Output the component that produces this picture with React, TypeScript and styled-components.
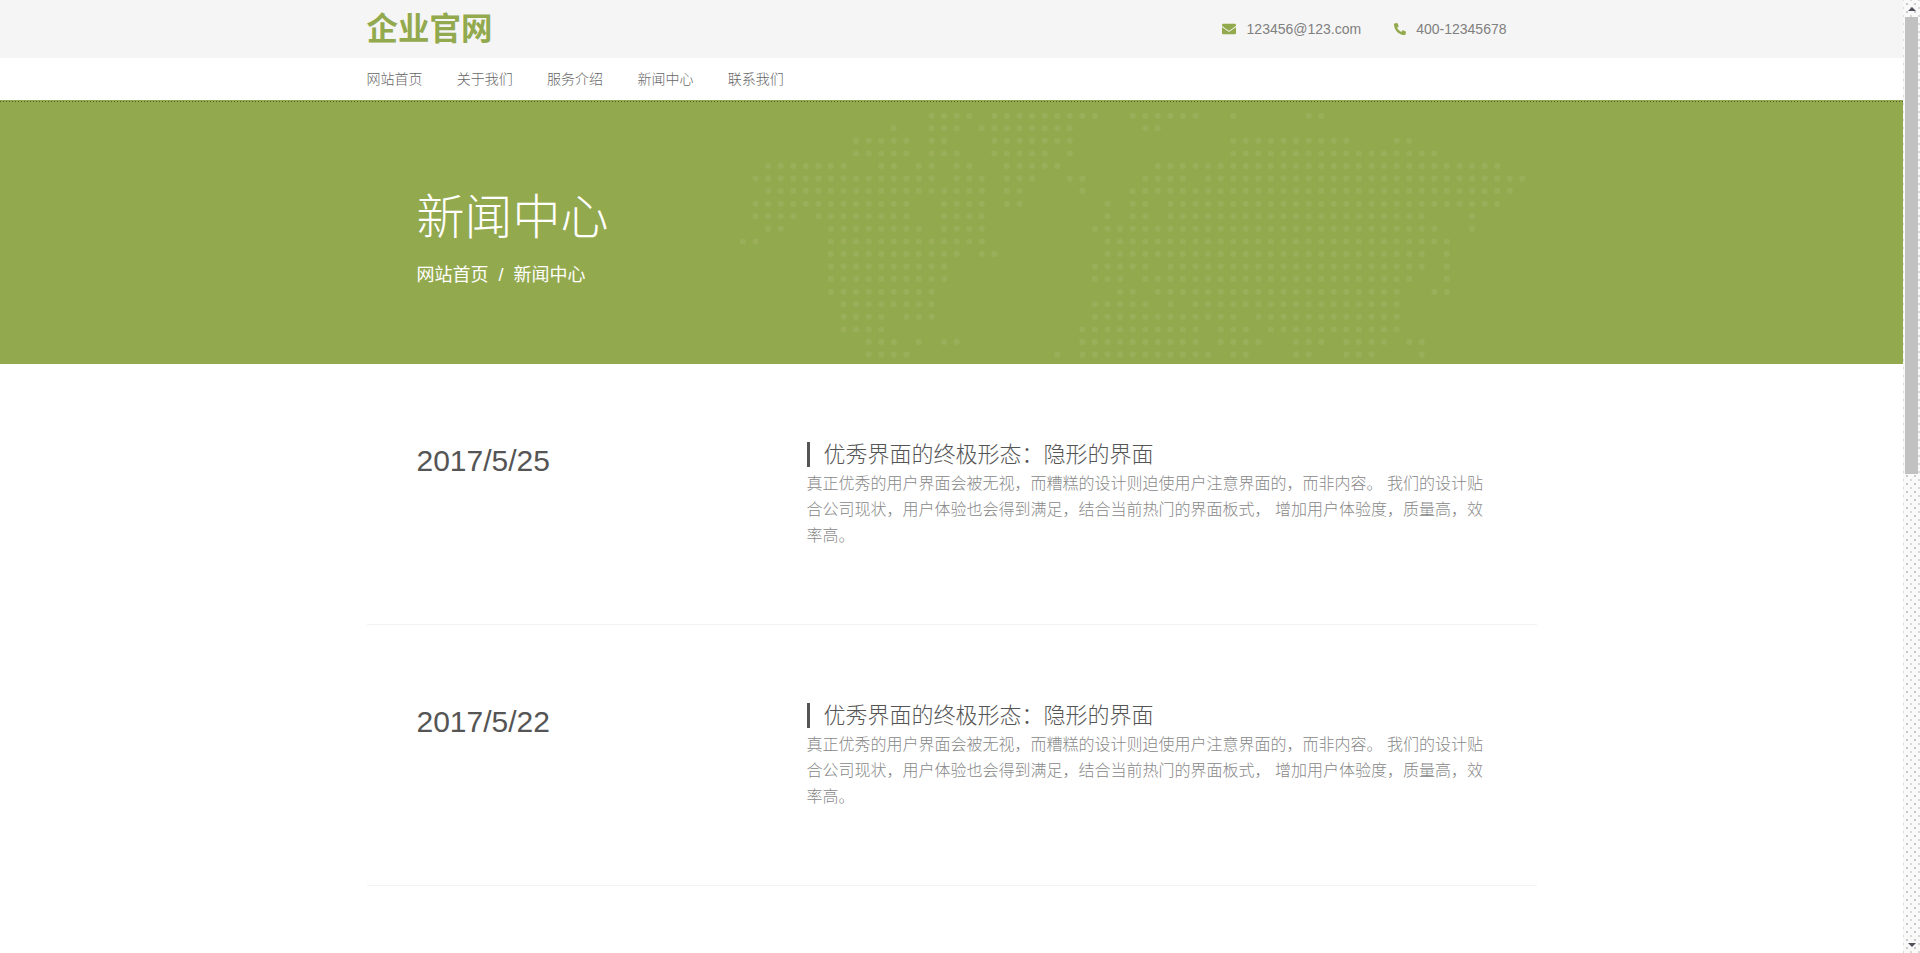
import React from 'react';
import { FaEnvelope, FaPhoneAlt } from 'react-icons/fa';
import styled, { createGlobalStyle } from 'styled-components';

const FONT = '"Liberation Sans", "Noto Sans CJK SC", sans-serif';

// 世界地图的点阵：每行是若干列区间
const MAP_ROWS: string[] = [
  '15-18 20-28 31-36 39 45-46',
  '12 15-17 19-26 32-33',
  '9-13 15-16 20-26 39-48 52-53',
  '9-13 15-17 20-24 26 39-55',
  '2-8 11-12 14-15 17-18 21-25 33-60',
  '1-15 17-19 21-23 26-27 32-35 37-62',
  '2-19 21-22 27 31-61',
  '1-13 16-19 21-22 29 31-32 34-60',
  '1-4 6-13 16-19 29 31-32 34-54 58',
  '2-3 7-14 16-19 28-55 58',
  '0-1 7-19 29-56',
  '7-17 19-20 29-54 56',
  '7-16 28-32 34-54 56',
  '7-16 28-30 32-53 56',
  '7-15 30-31 33-52 55-56',
  '8-15 28-32 34 36-52',
  '8-11 13-15 28-39 41-52',
  '8-11 27-36 38-40 42-52',
  '10-12 14 16-17 27-36 38-41 44-46 48-51 53-54',
  '10-13 25 27-37 39-40 44-45 48-50 54',
];

const mapDots = MAP_ROWS.flatMap((row, rowIndex) =>
  row.split(' ').flatMap((range) => {
    const [from, to = from] = range.split('-').map(Number);
    return Array.from({ length: to - from + 1 }, (_, i) => ({ col: from + i, row: rowIndex }));
  }),
);

const navItems = ['网站首页', '关于我们', '服务介绍', '新闻中心', '联系我们'];

const newsItems = [{ date: '2017/5/25' }, { date: '2017/5/22' }];

const App = () => {
  return (
    <Shell>
      <GlobalStyle />
      <Page>
        <TopBar>
          <Container>
            <TopRow>
              <Logo>企业官网</Logo>
              <Contacts>
                <Contact>
                  <FaEnvelope size={14} />
                  <span>123456@123.com</span>
                </Contact>
                <Contact $tight>
                  <FaPhoneAlt size={12} />
                  <span>400-12345678</span>
                </Contact>
              </Contacts>
            </TopRow>
          </Container>
        </TopBar>
        <Container>
          <Nav>
            {navItems.map((item) => (
              <NavLink key={item}>{item}</NavLink>
            ))}
          </Nav>
        </Container>
        <Hero>
          <WorldMap width="1903" height="264" viewBox="0 0 1903 264">
            {mapDots.map((dot) => (
              <circle
                key={`${dot.row}-${dot.col}`}
                cx={743 + dot.col * 12.57}
                cy={15.7 + dot.row * 12.57}
                r="3"
              />
            ))}
          </WorldMap>
          <Container>
            <HeroInner>
              <HeroTitle>新闻中心</HeroTitle>
              <Breadcrumb>
                <span>网站首页</span>
                <Slash>/</Slash>
                <span>新闻中心</span>
              </Breadcrumb>
            </HeroInner>
          </Container>
        </Hero>
        <Container>
          {newsItems.map((item) => (
            <NewsItem key={item.date}>
              <NewsDate>{item.date}</NewsDate>
              <NewsBody>
                <NewsTitle>优秀界面的终极形态：隐形的界面</NewsTitle>
                <NewsText>
                  真正优秀的用户界面会被无视，而糟糕的设计则迫使用户注意界面的，而非内容。 我们的设计贴合公司现状，用户体验也会得到满足，结合当前热门的界面板式，
                  增加用户体验度，质量高，效率高。
                </NewsText>
              </NewsBody>
            </NewsItem>
          ))}
        </Container>
      </Page>
      <ScrollTrack>
        <ArrowUp />
        <Thumb />
        <ArrowDown />
      </ScrollTrack>
    </Shell>
  );
};

export default App;

const GlobalStyle = createGlobalStyle`
  html, body {
    margin: 0;
    padding: 0;
    height: 100%;
    overflow: hidden;
    background: #fff;
    font-family: ${FONT};
  }
`;

const Shell = styled.div`
  display: flex;
  height: 953px;
  overflow: hidden;
`;

const Page = styled.div`
  flex: 1;
  min-width: 0;
  overflow: hidden;
`;

const Container = styled.div`
  width: 1170px;
  margin: 0 auto;
`;

const TopBar = styled.div`
  height: 58px;
  background: #f5f5f5;
`;

const TopRow = styled.div`
  display: flex;
  align-items: center;
  justify-content: space-between;
  height: 58px;
`;

const Logo = styled.div`
  font-size: 31.5px;
  font-weight: 700;
  line-height: 58px;
  color: #93a94e;
`;

const Contacts = styled.div`
  display: flex;
  gap: 33px;
  padding-right: 30px;
`;

const Contact = styled.div<{ $tight?: boolean }>`
  display: flex;
  align-items: center;
  gap: ${(p) => (p.$tight ? '10px' : '11px')};
  font-size: 14px;
  color: #808080;

  svg {
    color: #93a94e;
  }
`;

const Nav = styled.div`
  display: flex;
  gap: 34.3px;
  height: 40px;
  align-items: center;
`;

const NavLink = styled.a`
  font-size: 14px;
  font-weight: 300;
  color: #666;
`;

const Hero = styled.div`
  position: relative;
  height: 264px;
  margin-top: 2px;
  background-color: #93a94e;
  background-image: linear-gradient(to right, #4c5830 1px, transparent 1px);
  background-size: 3px 1px;
  background-position: 0 1px;
  background-repeat: repeat-x;
`;

const WorldMap = styled.svg`
  position: absolute;
  top: 0;
  left: 0;
  fill: rgba(255, 255, 255, 0.08);
`;

const HeroInner = styled.div`
  position: relative;
  padding: 87px 0 0 50px;
  color: #fff;
`;

const HeroTitle = styled.div`
  font-size: 48px;
  font-weight: 300;
  line-height: 62px;
`;

const Breadcrumb = styled.div`
  display: flex;
  margin-top: 13px;
  font-size: 18px;
  line-height: 26px;
`;

const Slash = styled.span`
  padding: 0 10px;
`;

const NewsItem = styled.div`
  display: flex;
  height: 261px;
  box-sizing: border-box;
  padding: 78px 0 0 50px;
  border-bottom: 1px solid #f3f3f3;
`;

const NewsDate = styled.div`
  width: 390px;
  flex: none;
  font-size: 30px;
  line-height: 38px;
  color: #555;
`;

const NewsBody = styled.div`
  width: 685px;
`;

const NewsTitle = styled.div`
  height: 25px;
  padding-left: 14px;
  border-left: 3px solid #555;
  font-size: 22px;
  font-weight: 300;
  line-height: 25px;
  color: #555;
`;

const NewsText = styled.div`
  margin-top: 4px;
  font-size: 16px;
  font-weight: 300;
  line-height: 26px;
  color: #888;
`;

const ScrollTrack = styled.div`
  flex: 0 0 17px;
  display: flex;
  flex-direction: column;
  align-items: center;
  height: 953px;
  background-color: #f9f9f9;
  background-image:
    radial-gradient(circle, #c8c8c8 0.7px, transparent 1px),
    radial-gradient(circle, #d8d8d8 0.7px, transparent 1px);
  background-size: 8px 8px;
  background-position:
    0 0,
    4px 4px;
`;

const ArrowUp = styled.div`
  flex: none;
  height: 0;
  margin: 7px 0 6px;
  border-left: 4px solid transparent;
  border-right: 4px solid transparent;
  border-bottom: 4px solid #50505a;
`;

const Thumb = styled.div`
  flex: none;
  width: 13px;
  height: 457px;
  background: #c1c1c1;
`;

const ArrowDown = styled.div`
  flex: none;
  height: 0;
  margin-top: auto;
  margin-bottom: 6px;
  border-left: 4px solid transparent;
  border-right: 4px solid transparent;
  border-top: 4px solid #50505a;
`;
